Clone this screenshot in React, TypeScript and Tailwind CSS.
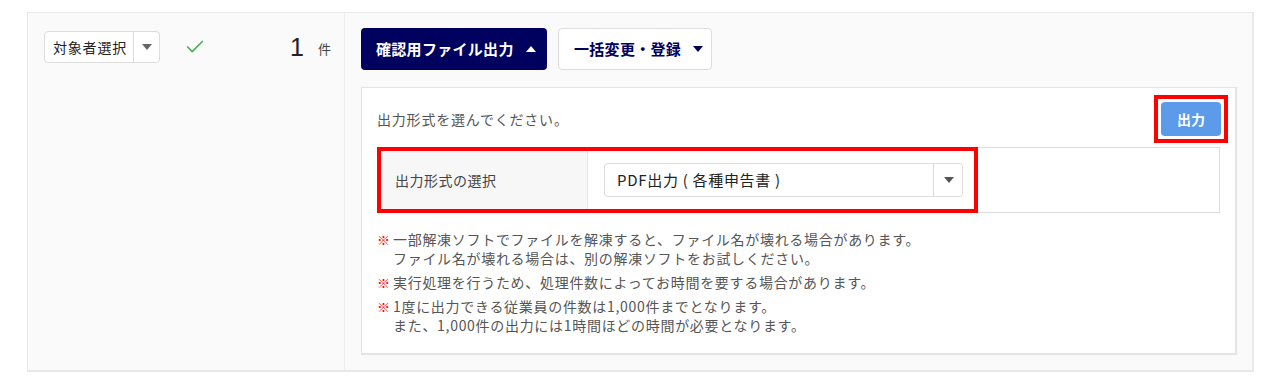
import { Check } from 'lucide-react';

const font = { fontFamily: '"Noto Sans CJK JP", "Liberation Sans", sans-serif' };

function Caret({ up = false, className = '' }: { up?: boolean; className?: string }) {
  return (
    <svg width="10" height="6" viewBox="0 0 10 6" className={className}>
      {up ? <path d="M0 6 L5 0 L10 6 Z" fill="currentColor" /> : <path d="M0 0 L10 0 L5 6 Z" fill="currentColor" />}
    </svg>
  );
}

const notes = [
  ['一部解凍ソフトでファイルを解凍すると、ファイル名が壊れる場合があります。', 'ファイル名が壊れる場合は、別の解凍ソフトをお試しください。'],
  ['実行処理を行うため、処理件数によってお時間を要する場合があります。'],
  ['1度に出力できる従業員の件数は1,000件までとなります。', 'また、1,000件の出力には1時間ほどの時間が必要となります。'],
];

export default function App() {
  return (
    <div className="h-[382px] w-[1280px] bg-white pl-[27px] pt-[12px]" style={font}>
      <div className="flex h-[360px] w-[1227px] border border-r-2 border-b-2 border-[#e8e8e8] bg-[#fafafa]">
        {/* left column */}
        <div className="w-[317px] shrink-0 border-r border-[#efefef] pl-[16px] pt-[18px]">
          <div className="flex items-center">
            <div className="flex h-[32px] w-[116px] items-center rounded-[4px] border border-[#dcdcdc] bg-white">
              <span className="w-[89px] border-r border-[#dcdcdc] pl-[8px] text-[14px] leading-[30px] tracking-[0.8px] text-[#222]">対象者選択</span>
              <Caret className="ml-[8px] text-[#666]" />
            </div>
            <Check size={22} strokeWidth={1.8} className="ml-[24px] text-[#4caf50]" />
            <span className="ml-[84px] text-[25px] leading-none text-[#222]" style={{ fontFamily: '"Liberation Sans", sans-serif' }}>1</span>
            <span className="ml-[14px] mt-[4px] text-[13px] text-[#444]">件</span>
          </div>
        </div>

        {/* right column */}
        <div className="pl-[16px] pt-[15px]">
          <div className="flex gap-[11px]">
            <button className="flex h-[42px] w-[186px] items-center rounded-[4px] bg-[#00005f] pl-[15px] text-[15px] font-bold tracking-[0.3px] text-white">
              確認用ファイル出力
              <Caret up className="ml-[12px]" />
            </button>
            <button className="flex h-[42px] w-[154px] items-center rounded-[4px] border border-[#dcdcdc] bg-white pl-[15px] text-[15px] font-bold tracking-[0.3px] text-[#00005f]">
              一括変更・登録
              <Caret className="ml-[12px]" />
            </button>
          </div>

          <div className="mt-[17px] h-[268px] w-[876px] border border-r-2 border-b-2 border-[#e4e4e4] bg-white pl-[15px] pr-[15px] pt-[7px]">
            <div className="flex items-center justify-between">
              <span className="text-[14px] tracking-[0.8px] text-[#555]">出力形式を選んでください。</span>
              <div className="mr-[-8px] border-4 border-[#ff0000] p-[3px]">
                <button className="h-[34px] w-[60px] rounded-[4px] bg-[#5b9bea] text-[14px] font-bold text-white">出力</button>
              </div>
            </div>

            <div className="mt-[4px] flex h-[66px] w-[843px]">
              <div className="flex w-[601px] border-4 border-[#ff0000]">
                <div className="flex w-[207px] items-center border-r border-[#e4e4e4] bg-[#f7f7f7] pl-[14px] text-[14px] tracking-[0.5px] text-[#444]">
                  出力形式の選択
                </div>
                <div className="flex flex-1 items-center pl-[16px]">
                  <div className="flex h-[34px] w-[359px] items-center rounded-[4px] border border-[#dcdcdc] bg-white">
                    <span className="w-[329px] border-r border-[#dcdcdc] pl-[12px] text-[15px] leading-[32px] tracking-[0.7px] text-[#222]">PDF出力 ( 各種申告書 )</span>
                    <Caret className="ml-[10px] text-[#555]" />
                  </div>
                </div>
              </div>
              <div className="flex-1 border border-l-0 border-[#dcdcdc]" />
            </div>

            <div className="mt-[17px] flex flex-col gap-[5px]">
              {notes.map((lines, i) => (
                <div key={i} className="flex text-[14px] leading-[19px] tracking-[0.7px] text-[#555]">
                  <span className="w-[16px] shrink-0 text-[13px] font-bold tracking-normal text-[#ff0000]">※</span>
                  <div>
                    {lines.map((l) => (
                      <div key={l}>{l}</div>
                    ))}
                  </div>
                </div>
              ))}
            </div>
          </div>
        </div>
      </div>
    </div>
  );
}
